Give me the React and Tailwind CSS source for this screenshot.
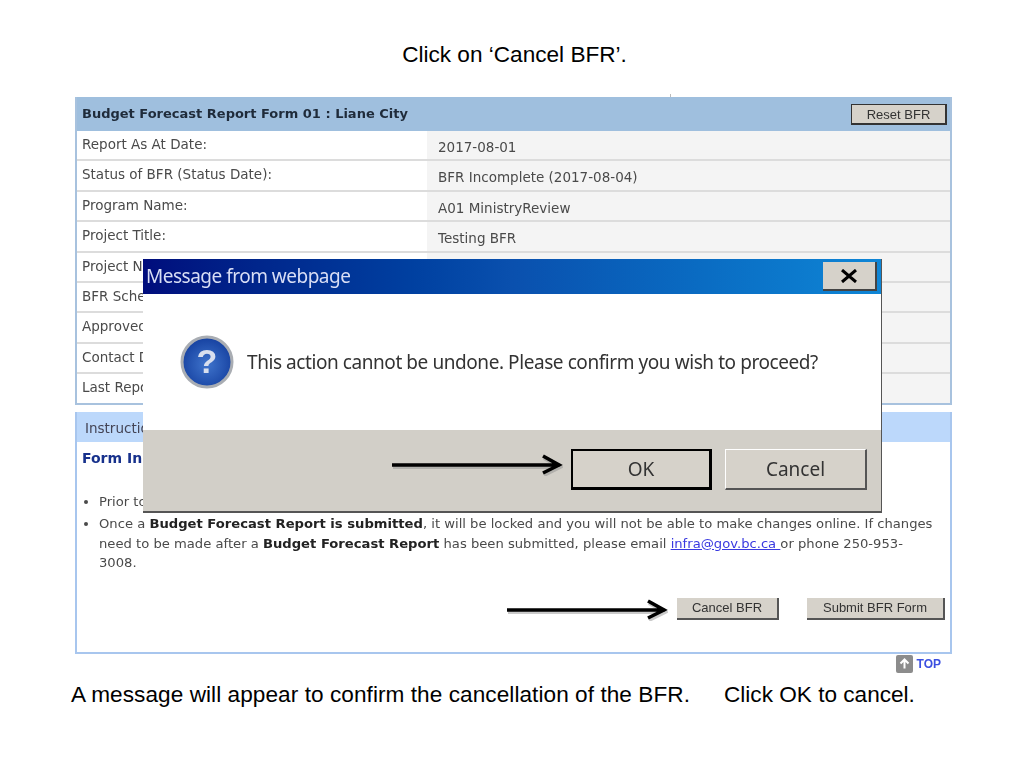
import React from "react";

const rows = [
  ["Report As At Date:", "2017-08-01"],
  ["Status of BFR (Status Date):", "BFR Incomplete (2017-08-04)"],
  ["Program Name:", "A01 MinistryReview"],
  ["Project Title:", "Testing BFR"],
  ["Project Number:", ""],
  ["BFR Schedule:", ""],
  ["Approved Date:", ""],
  ["Contact Details:", ""],
  ["Last Report Date:", ""],
];

const Arrow = ({ className, width }) => (
  <svg className={className} width={width} height="24" viewBox={`0 0 ${width} 24`} fill="none">
    <path d={`M1 14H${width - 3}M${width - 20} 5L${width - 4} 14L${width - 20} 22`} stroke="#8a8a8a" strokeOpacity="0.45" strokeWidth="4" transform="translate(1 1)" />
    <path d={`M1 13H${width - 3}M${width - 20} 4L${width - 4} 13L${width - 20} 21`} stroke="#000" strokeWidth="3.6" />
  </svg>
);

const QuestionIcon = () => (
  <svg width="54" height="54" viewBox="0 0 54 54">
    <defs>
      <radialGradient id="ball" cx="0.5" cy="0.55" r="0.6">
        <stop offset="0" stopColor="#3f74cc" />
        <stop offset="1" stopColor="#123c9c" />
      </radialGradient>
    </defs>
    <circle cx="27" cy="27" r="25" fill="url(#ball)" stroke="#a9adb3" strokeWidth="3" />
    <text x="27" y="38" textAnchor="middle" fontSize="34" fontWeight="700" fill="#d8dfee" fontFamily="Liberation Sans, sans-serif">?</text>
  </svg>
);

const App = () => {
  return (
    <div className="relative w-[1024px] h-[768px] overflow-hidden bg-white font-['Liberation_Sans',sans-serif] text-black">
      <h1 className="pt-[42px] pl-[5px] text-center text-[22.6px] leading-[26px]">Click on ‘Cancel BFR’.</h1>

      <div className="mx-[75px] mt-[29px] w-[877px] blur-[0.5px] font-['DejaVu_Sans',sans-serif] text-[#4a4a4a]">
        <div className="border-2 border-t-0 border-[#a8c2de] bg-white">
          <div className="flex h-[34px] items-center justify-between bg-[#9fbfde] pl-[5px] pr-[3px]">
            <span className="text-[13px] font-bold text-[#1f2b3a]">Budget Forecast Report Form 01 : Liane City</span>
            <button className="h-[21px] w-[96px] border border-[#333] border-r-2 border-b-2 bg-[#d6d2ca] font-['Liberation_Sans',sans-serif] text-[13px] text-[#333]">Reset BFR</button>
          </div>
          {rows.map(([label, value]) => (
            <div key={label} className="flex h-[30.4px] border-b-2 border-[#dcdcdc] last:h-[28.4px] last:border-b-0">
              <div className="w-[350px] pl-[5px] pt-[3px] text-[13.5px]">{label}</div>
              <div className="flex-1 bg-[#f4f4f4] pl-[11px] pt-[6px] text-[13.5px]">{value}</div>
            </div>
          ))}
        </div>

        <div className="mt-[7px] flex h-[242px] flex-col border-2 border-t-0 border-[#a8c6ee]">
          <div className="h-[30px] bg-[#bcd8fb] pl-[8px] pt-[6px] text-[13.5px] text-[#445]">Instructions</div>
          <div className="flex-1 bg-white pl-[5px] pr-[14px]">
            <h2 className="pt-[6px] text-[14px] font-bold text-[#17318c]">Form Instructions</h2>
            <ul className="mt-[23px] list-disc pl-[17px] text-[13.15px] leading-[19.5px]">
              <li>Prior to submitting the form, please review all of the details.</li>
              <li className="mt-[3px]">
                Once a <b className="text-[#222]">Budget Forecast Report is submitted</b>, it will be locked and you will not be able to make changes online. If changes need to be made after a <b className="text-[#222]">Budget Forecast Report</b> has been submitted, please email <a className="text-[#3a3ae0] underline">infra@gov.bc.ca </a> or phone 250-953-3008.
              </li>
            </ul>
            <div className="mt-[25px] mr-[-9px] flex justify-end gap-[28px]">
              <button className="h-[22px] w-[102px] border-r-2 border-b-2 border-[#555] bg-[#d6d2ca] font-['Liberation_Sans',sans-serif] text-[13px] text-[#333]">Cancel BFR</button>
              <button className="h-[22px] w-[138px] border-r-2 border-b-2 border-[#555] bg-[#d6d2ca] font-['Liberation_Sans',sans-serif] text-[13px] text-[#333]">Submit BFR Form</button>
            </div>
          </div>
        </div>

        <div className="flex h-[20px] items-center justify-end gap-[4px] pr-[11px]">
          <span className="flex h-[18px] w-[17px] items-center justify-center rounded-[2px] bg-[#8c8c8c]">
            <svg width="11" height="11" viewBox="0 0 11 11" fill="none" stroke="#fff" strokeWidth="2">
              <path d="M5.5 10.5V2M1.5 5.5L5.5 1.5L9.5 5.5" />
            </svg>
          </span>
          <span className="font-['Liberation_Sans',sans-serif] text-[12px] font-bold text-[#3b4fe0]">TOP</span>
        </div>
      </div>

      <div className="mt-[8px] flex pl-[71px] text-[22.6px] leading-[26px]">
        <span className="w-[653px] tracking-[0.06px]">A message will appear to confirm the cancellation of the BFR.</span>
        <span>Click OK to cancel.</span>
      </div>

      {/* the dialog sits on top of the form */}
      <div className="absolute left-[143px] top-[259px] flex h-[254px] w-[739px] flex-col border-r border-b-2 border-[#555] bg-white font-['Noto_Sans',sans-serif] blur-[0.4px]">
        <div className="flex h-[35px] items-center justify-between bg-gradient-to-r from-[#000c7c] via-[#0a50ae] to-[#0f86d6] pl-[3px] pr-[4px]">
          <span className="text-[19px] tracking-[-0.5px] text-[#d8def5]">Message from webpage</span>
          <span className="flex h-[29px] w-[54px] items-center justify-center border-r-2 border-b-2 border-[#444] bg-[#d6d2ca]">
            <svg width="16" height="14" viewBox="0 0 16 14" stroke="#000" strokeWidth="3">
              <path d="M1 1L15 13M15 1L1 13" />
            </svg>
          </span>
        </div>
        <div className="flex h-[136px] items-center gap-[13px] pl-[37px]">
          <QuestionIcon />
          <span className="text-[19px] tracking-[-0.43px] text-[#333]">This action cannot be undone. Please confirm you wish to proceed?</span>
        </div>
        <div className="flex flex-1 justify-end gap-[13px] bg-[#d2cfc8] pr-[14px] pt-[19px] text-[19px] text-[#333]">
          <button className="h-[41px] w-[141px] border-2 border-r-[3px] border-b-[3px] border-black bg-[#d6d2ca]">OK</button>
          <button className="h-[41px] w-[142px] border-r-2 border-b-2 border-[#555] border-t border-l border-t-white border-l-white bg-[#d6d2ca]">Cancel</button>
        </div>
      </div>

      <Arrow className="absolute left-[391px] top-[452px]" width={172} />
      <Arrow className="absolute left-[506px] top-[597px]" width={162} />
      <div className="absolute left-[670px] top-[94px] h-[3px] w-px bg-[#bbb]" />
    </div>
  );
};

export default App;
